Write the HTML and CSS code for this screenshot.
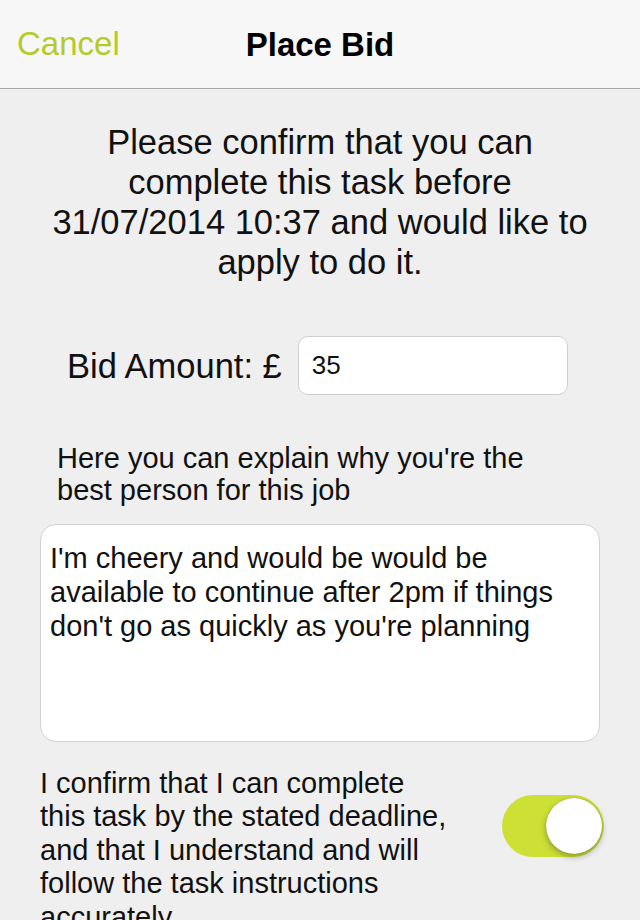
FILE: index.html
```html
<!DOCTYPE html>
<html>
<head>
<meta charset="utf-8">
<link rel="stylesheet" href="styles.css">
</head>
<body>
<header class="navbar">
  <span class="nav-cancel">Cancel</span>
  <span class="nav-title">Place Bid</span>
</header>
<main class="content">
  <p class="intro">Please confirm that you can complete this task before 31/07/2014 10:37 and would like to apply to do it.</p>
  <div class="bid-row">
    <span class="bid-label">Bid Amount: £</span>
    <div class="bid-input">35</div>
  </div>
  <p class="explain">Here you can explain why you're the best person for this job</p>
  <div class="textarea">I'm cheery and would be would be available to continue after 2pm if things don't go as quickly as you're planning</div>
  <div class="confirm-row">
    <p class="confirm-text">I confirm that I can complete this task by the stated deadline, and that I understand and will follow the task instructions accurately</p>
    <div class="toggle"><div class="knob"></div></div>
  </div>
</main>
</body>
</html>
```
FILE: styles.css
```css
html, body {
  margin: 0;
  padding: 0;
  background: #efefef;
  font-family: "Liberation Sans", Arial, Helvetica, sans-serif;
  color: #111;
  height: 920px;
  overflow: hidden;
}
.navbar {
  height: 88px;
  background: #f7f7f7;
  border-bottom: 1px solid #a8a8a8;
  position: relative;
  display: flex;
  align-items: center;
  justify-content: center;
}
.nav-cancel {
  position: absolute;
  left: 17px;
  top: 24px;
  font-size: 33px;
  color: #b4cb2a;
  line-height: 40px;
}
.nav-title {
  font-size: 33px;
  font-weight: bold;
  color: #000;
  line-height: 40px;
  margin-top: 2px;
}
.content {
  display: flex;
  flex-direction: column;
}
.intro {
  margin: 33px auto 0;
  width: 550px;
  text-align: center;
  font-size: 34.5px;
  line-height: 40px;
}
.bid-row {
  display: flex;
  align-items: center;
  margin-top: 54px;
  padding-left: 67px;
}
.bid-label {
  font-size: 34.5px;
  line-height: 40px;
  margin-right: 16px;
}
.bid-input {
  width: 255px;
  height: 57px;
  background: #fff;
  border: 1px solid #cfcfcf;
  border-radius: 10px;
  font-size: 26px;
  line-height: 57px;
  padding-left: 13px;
  color: #111;
}
.explain {
  margin: 47px 0 0 57px;
  width: 500px;
  font-size: 29px;
  line-height: 32px;
}
.textarea {
  margin: 18px 0 0 40px;
  width: 540px;
  height: 200px;
  background: #fff;
  border: 1px solid #d2d2d2;
  border-radius: 16px;
  padding: 16px 9px 0;
  font-size: 29px;
  line-height: 34px;
}
.confirm-row {
  display: flex;
  align-items: flex-start;
  margin-top: 25px;
  padding-left: 40px;
}
.confirm-text {
  margin: 0;
  width: 412px;
  font-size: 29px;
  line-height: 33.4px;
}
.toggle {
  margin-left: 50px;
  margin-top: 28px;
  width: 102px;
  height: 62px;
  border-radius: 31px;
  background: #cde036;
  position: relative;
  flex-shrink: 0;
}
.knob {
  position: absolute;
  right: 2px;
  top: 3px;
  width: 56px;
  height: 56px;
  border-radius: 50%;
  background: #fff;
  box-shadow: 0 3px 6px rgba(0,0,0,0.3), 0 0 1px rgba(0,0,0,0.4);
}
```
